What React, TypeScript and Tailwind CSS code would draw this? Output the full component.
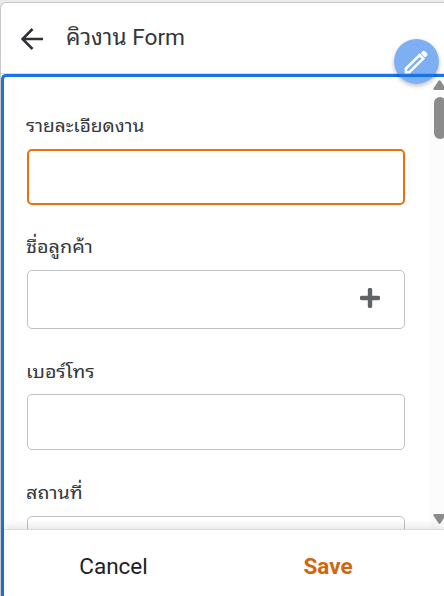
type FieldProps = {
	label: string;
	labelClass: string;
	boxClass: string;
	children?: React.ReactNode;
};

const Field = ({ label, labelClass, boxClass, children }: FieldProps) => {
	return (
		<div className="flex shrink-0 flex-col gap-[11px]">
			<label className="-ml-px h-6 whitespace-nowrap text-[18px] text-[#33373a]">
				<span className={`block origin-left leading-6 ${labelClass}`}>{label}</span>
			</label>
			<div
				className={`flex w-[378px] items-center justify-end rounded-[5px] bg-white ${boxClass}`}>
				{children}
			</div>
		</div>
	);
};

const Header = () => {
	return (
		<header className="relative flex h-[71px] shrink-0 items-center border-b border-[#dadce0] pl-5">
			<svg width="22" height="22" viewBox="0 0 22 22" className="mt-px" fill="none">
				<path d="M11.5 1 L1.5 11 L11.5 21 M1.5 11 H22" stroke="#303134" strokeWidth="2.6" />
			</svg>
			<h1 className="ml-[23px] whitespace-nowrap text-[22.7px] leading-8 text-[#33373a]">
				คิวงาน Form
			</h1>
			<button className="absolute left-[393px] top-9 z-10 flex size-[45px] items-center justify-center rounded-full bg-[#1a73e8]/57 shadow-[0_2px_4px_rgba(0,0,0,0.25)]">
				<svg width="24" height="24" viewBox="0 0 24 24" className="-ml-px mt-px">
					<path
						d="M1.9 22.2V18.6L15.7 5.1L19.2 8.6L5.3 22.2Z"
						fill="none"
						stroke="white"
						strokeWidth="2.6"
					/>
					<path d="M16.8 3.2L18.4 1.4Q19.8 .2 21.2 1.4L22.9 3.1Q24.1 4.5 22.9 5.8L21.1 7.5Z" fill="white" />
				</svg>
			</button>
		</header>
	);
};

const Scrollbar = () => {
	return (
		<div className="flex w-[14px] shrink-0 flex-col overflow-hidden bg-[#fcfcfc] pl-[3px] pt-[3px]">
			<svg width="13" height="10" viewBox="0 0 13 10" className="shrink-0">
				<path d="M5.5 .8 Q6.5 -.4 7.5 .8 L12.6 8.5 Q13 10 11.5 10 H1.5 Q0 10 .4 8.5Z" fill="#8b8b8b" />
			</svg>
			<div className="ml-px mt-[7px] h-[42px] w-3 shrink-0 rounded-full bg-[#8b8b8b]" />
			<svg width="13" height="10" viewBox="0 0 13 10" className="mb-[5px] mt-auto shrink-0">
				<path d="M5.5 9.2 Q6.5 10.4 7.5 9.2 L12.6 1.5 Q13 0 11.5 0 H1.5 Q0 0 .4 1.5Z" fill="#8b8b8b" />
			</svg>
		</div>
	);
};

export default function App() {
	return (
		<div className="h-[596px] w-[444px] overflow-hidden bg-[#ebebeb] pt-0.5 font-['Roboto','Noto_Sans_Thai_Looped','Loma','Waree','Noto_Sans',sans-serif]">
			<div className="flex h-[594px] flex-col overflow-hidden rounded-tl-[6px] border-l border-t border-[#c8c8c8] bg-white">
				<Header />
				<main className="flex min-h-0 flex-1 flex-col rounded-tl-[5px] border-l-[3px] border-t-[3px] border-[#1a73e8]">
					<div className="flex h-[452px] shrink-0 overflow-hidden">
						<div className="flex flex-1 flex-col gap-[30px] pl-[23px] pt-[37px]">
							<Field
								label="รายละเอียดงาน"
								labelClass="scale-x-[1.06]"
								boxClass="h-14 border-2 border-[#e8710a]"
							/>
							<Field
								label="ชื่อลูกค้า"
								labelClass="scale-x-[1.1]"
								boxClass="h-[59px] border border-[#bdc1c6] pr-6">
								<svg width="20" height="20" viewBox="0 0 20 20" className="-mt-[3px]">
									<path d="M10 2V18M2 10H18" stroke="#5f6368" strokeWidth="4.4" strokeLinecap="round" />
								</svg>
							</Field>
							<Field
								label="เบอร์โทร"
								labelClass="translate-y-px scale-x-[1.09]"
								boxClass="h-14 border border-[#bdc1c6]"
							/>
							<div className="mt-px">
								<Field
									label="สถานที่"
									labelClass="scale-x-[1.1]"
									boxClass="h-14 border border-[#bdc1c6]"
								/>
							</div>
						</div>
						<Scrollbar />
					</div>
					<footer className="relative flex flex-1 items-center border-t border-[#dadce0] bg-white pt-[7px] text-[22.5px] shadow-[0_-1px_10px_rgba(0,0,0,0.14)]">
						<button className="w-[219px] text-[#202124]">Cancel</button>
						<button className="w-[210px] font-bold text-[#d0670b]">Save</button>
					</footer>
				</main>
			</div>
		</div>
	);
}
